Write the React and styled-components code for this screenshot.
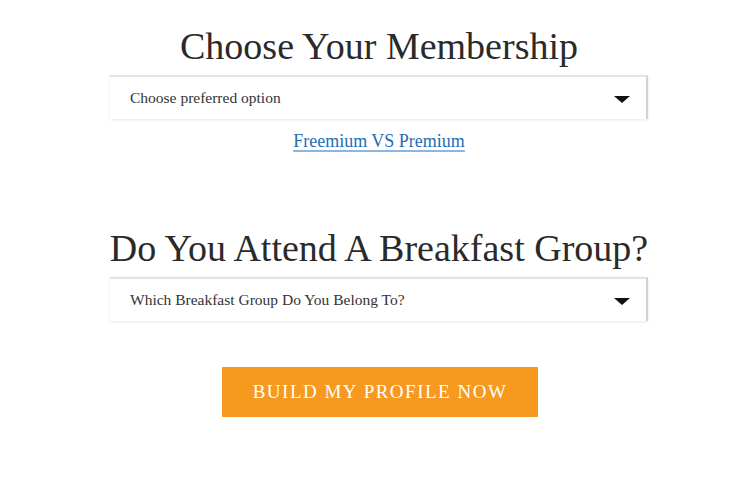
import styled, { createGlobalStyle } from "styled-components";

const GlobalStyle = createGlobalStyle`
  body {
    margin: 0;
    background: #fff;
    font-family: "Liberation Serif", "DejaVu Serif", serif;
    color: #2b2b2b;
  }
`;

const Page = styled.div`
  box-sizing: border-box;
  width: 748px;
  display: flex;
  flex-direction: column;
  align-items: center;
  padding: 23px 0 0 10px;
`;

const Section = styled.section`
  width: 538px;
  display: flex;
  flex-direction: column;
  align-items: center;
  margin-bottom: ${props => props.gap || 0}px;
`;

const Heading = styled.h2`
  margin: 0 0 6px;
  font-family: "Liberation Serif", serif;
  font-weight: normal;
  font-size: 38px;
  line-height: 46px;
  color: #2a2a2a;
  white-space: nowrap;
`;

const SelectBox = styled.div`
  box-sizing: border-box;
  width: 538px;
  height: 44px;
  display: flex;
  align-items: center;
  justify-content: space-between;
  padding: 0 16px 0 20px;
  background: #fff;
  border-top: 2px solid #e3e3e3;
  border-right: 2px solid #d2d2d2;
  box-shadow: 0 1px 3px rgba(0, 0, 0, 0.1);
  font-size: 15.5px;
  color: #333;
`;

const Arrow = styled.span`
  width: 0;
  height: 0;
  border-left: 8px solid transparent;
  border-right: 8px solid transparent;
  border-top: 7px solid #111;
  margin-top: 3px;
`;

const CompareLink = styled.a`
  margin-top: 12px;
  font-size: 18px;
  color: #1f6db3;
  text-decoration: underline;
  text-decoration-color: #8ab6df;
  text-decoration-thickness: 2px;
  text-underline-offset: 3px;
  cursor: pointer;
`;

const Button = styled.button`
  width: 316px;
  height: 50px;
  margin-left: 2px;
  border: none;
  background: #f7991f;
  color: #fff;
  font-family: "Liberation Serif", serif;
  font-size: 19px;
  letter-spacing: 1.5px;
  text-transform: uppercase;
  cursor: pointer;
`;

function Select({ label }) {
  return (
    <SelectBox>
      <span>{label}</span>
      <Arrow />
    </SelectBox>
  );
}

export default function App() {
  return (
    <>
      <GlobalStyle />
      <Page>
        <Section gap={73}>
          <Heading>Choose Your Membership</Heading>
          <Select label="Choose preferred option" />
          <CompareLink>Freemium VS Premium</CompareLink>
        </Section>
        <Section gap={46}>
          <Heading>Do You Attend A Breakfast Group?</Heading>
          <Select label="Which Breakfast Group Do You Belong To?" />
        </Section>
        <Button>Build my profile now</Button>
      </Page>
    </>
  );
}
